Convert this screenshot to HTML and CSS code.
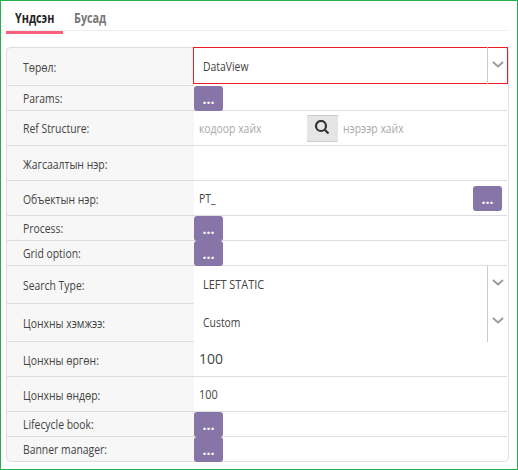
FILE: index.html
```html
<!DOCTYPE html>
<html lang="mn">
<head>
<meta charset="utf-8">
<title>Үндсэн</title>
<link rel="stylesheet" href="styles.css">
</head>
<body>
<nav class="tabs">
  <a class="tab active"><span class="t">Үндсэн</span></a>
  <a class="tab"><span class="t">Бусад</span></a>
</nav>
<main class="panel">
  <div class="row tall first"><div class="label"><span class="t">Төрөл:</span></div><div class="value select focus"><span class="t">DataView</span><i class="arrow"><svg viewBox="0 0 12 8"><path d="M1 1l5 4.5 5-4.5"/></svg></i></div></div>
  <div class="row short"><div class="label"><span class="t">Params:</span></div><div class="value"><button class="more">...</button></div></div>
  <div class="row ref"><div class="label"><span class="t">Ref Structure:</span></div><div class="value field"><span class="t hint code">кодоор хайх</span><button class="search"><svg viewBox="0 0 16 16"><circle cx="7" cy="6" r="5"/><path d="M10.5 9.5l4 4"/></svg></button><span class="t hint">нэрээр хайх</span></div></div>
  <div class="row"><div class="label"><span class="t">Жагсаалтын нэр:</span></div><div class="value"></div></div>
  <div class="row"><div class="label"><span class="t">Объектын нэр:</span></div><div class="value field"><span class="t">PT_</span><button class="more end">...</button></div></div>
  <div class="row short"><div class="label"><span class="t">Process:</span></div><div class="value"><button class="more">...</button></div></div>
  <div class="row short"><div class="label"><span class="t">Grid option:</span></div><div class="value"><button class="more">...</button></div></div>
  <div class="row tall"><div class="label"><span class="t">Search Type:</span></div><div class="value select"><span class="t caps">LEFT STATIC</span><i class="arrow"><svg viewBox="0 0 12 8"><path d="M1 1l5 4.5 5-4.5"/></svg></i></div></div>
  <div class="row tall"><div class="label"><span class="t">Цонхны хэмжээ:</span></div><div class="value select"><span class="t">Custom</span><i class="arrow"><svg viewBox="0 0 12 8"><path d="M1 1l5 4.5 5-4.5"/></svg></i></div></div>
  <div class="row"><div class="label"><span class="t">Цонхны өргөн:</span></div><div class="value field"><span class="wide">100</span></div></div>
  <div class="row"><div class="label"><span class="t">Цонхны өндөр:</span></div><div class="value field"><span class="t caps">100</span></div></div>
  <div class="row short"><div class="label"><span class="t">Lifecycle book:</span></div><div class="value"><button class="more">...</button></div></div>
  <div class="row short"><div class="label"><span class="t">Banner manager:</span></div><div class="value"><button class="more">...</button></div></div>
</main>
</body>
</html>
```
FILE: styles.css
```css
* { box-sizing: border-box; }
body {
  margin: 0;
  height: 470px;
  padding: 0 8px 0 5px;
  border: 1px solid #22b14c;
  background: #fff;
  color: #444;
  font: 13.5px/18px "Open Sans", "Noto Sans", sans-serif;
  overflow: hidden;
}
.t {
  display: inline-block;
  white-space: nowrap;
  transform: scaleX(.77);
  transform-origin: 0 50%;
}
.t.caps { transform: scaleX(.81); }
.tabs {
  display: flex;
  height: 30px;
  margin-right: 1px;
  border-bottom: 1px solid #eee;
}
.tab {
  width: 59px;
  height: 33px;
  padding: 8px 0 0 9px;
  font-size: 14.5px;
  font-weight: 700;
  color: #777;
}
.tab .t { transform: scaleX(.745); }
.tab.active { width: 57px; color: #222; border-bottom: 3px solid #f9627a; margin-right: 2px; }
.panel {
  margin-top: 16px;
  height: 415px;
  border: 1px solid #ddd;
  border-right-color: #e0e0e0;
  border-radius: 5px;
  background: linear-gradient(to right, #f7f7f7 187px, #fff 187px);
}
.row { display: flex; height: 35px; }
.row.tall { height: 38px; }
.row.short { height: 25px; }
.label {
  width: 187px;
  padding: 9px 0 0 16px;
  border-bottom: 1px solid #ddd;
}
.tall .label { padding-top: 10px; }
.ref .label { padding-top: 8px; }
.short .label { padding-top: 3px; }
.value {
  flex: 1;
  margin-right: 1px;
  border-bottom: 1px solid #ddd;
}
.row:last-child .label, .row:last-child .value { border-bottom: 0; }
.field { display: flex; align-items: center; padding-left: 5px; }
.select {
  display: flex;
  align-items: center;
  justify-content: space-between;
  padding: 0 0 2px 9px;
  border: 0;
}
.select .arrow { margin-bottom: -2px; }
.focus {
  height: 37px;
  margin: -1px 0 0 -1px;
  padding-bottom: 0;
  border: 1px solid #ed1c24;
}
.arrow {
  width: 20px;
  height: 38px;
  padding: 13px 0 0 4px;
  border-left: 1px solid #ccc;
}
.focus .arrow { height: 37px; margin: 0; padding-top: 14px; }
.arrow svg { display: block; width: 12px; height: 8px; fill: none; stroke: #999; stroke-width: 1.8; }
.more {
  display: block;
  width: 29px;
  height: 25px;
  padding: 0;
  border: 0;
  border-radius: 3px;
  background: #8775a7;
  color: #fff;
  font: 700 14px/23px "Open Sans", sans-serif;
}
.more.end { margin: 0 5px 0 auto; }
.code { width: 108px; margin-right: 0; }
.search {
  width: 31px;
  height: 27px;
  margin-right: 5px;
  padding: 4px 7px;
  border: 1px solid #ccc;
  border-width: 1px 0;
  background: #e5e5e5;
}
.search svg { display: block; width: 16px; height: 16px; fill: none; stroke: #333; stroke-width: 2.2; }
.hint { color: #aaa; }
.wide { font-size: 14px; }
```
